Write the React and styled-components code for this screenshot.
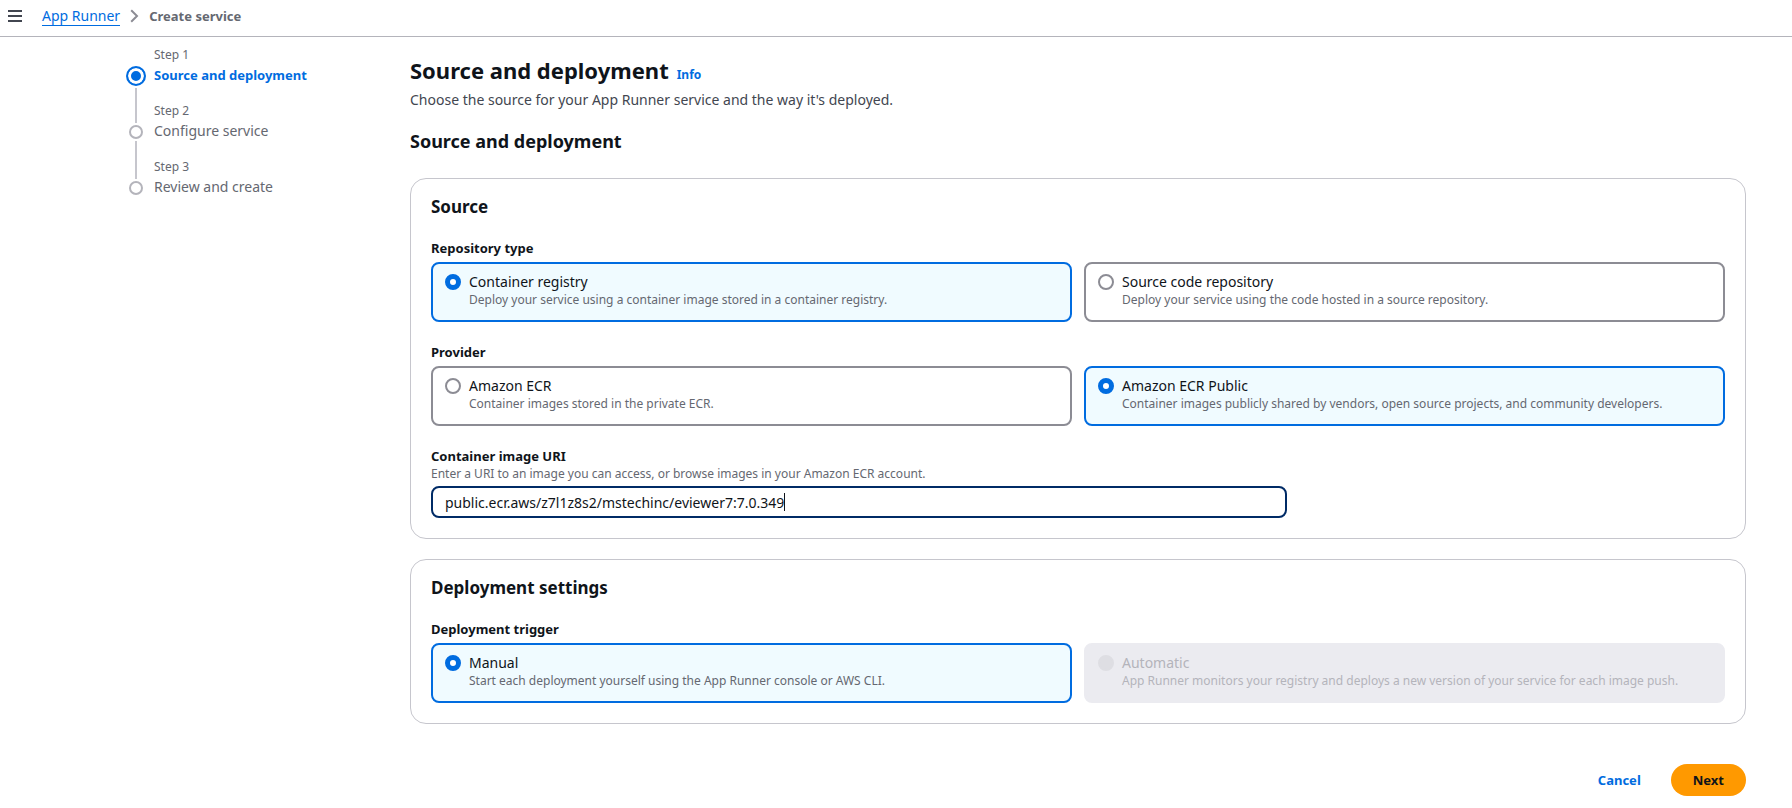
import React, { useLayoutEffect, useRef, useState } from 'react'
import styled, { createGlobalStyle } from 'styled-components';

const steps = ['Source and deployment', 'Configure service', 'Review and create'];

function OptionTile({ name, value, title, description, selected, onSelect, disabled }) {
  return (
    <Tile>
      <TileRadio
        type="radio"
        name={name}
        value={value}
        checked={selected === value}
        disabled={disabled}
        onChange={() => onSelect(value)}
      />
      <TileText>
        <TileTitle>{title}</TileTitle>
        <TileDescription>{description}</TileDescription>
      </TileText>
    </Tile>
  )
}

// Text input with its own caret, placed by measuring the text before it
function CaretInput({ value, onChange, ...rest }) {
  const inputRef = useRef(null);
  const [caret, setCaret] = useState(null);

  const placeCaret = () => {
    const input = inputRef.current;
    const style = getComputedStyle(input);
    const context = document.createElement('canvas').getContext('2d');
    context.font = `${style.fontWeight} ${style.fontSize} ${style.fontFamily}`;
    const width = context.measureText(input.value.slice(0, input.selectionEnd)).width;
    const start = parseInt(style.borderLeftWidth) + parseInt(style.paddingLeft);
    setCaret(Math.round(start + width - input.scrollLeft));
  };

  useLayoutEffect(() => {
    const input = inputRef.current;
    input.focus();
    input.setSelectionRange(input.value.length, input.value.length);
    placeCaret();
  }, []);

  return (
    <InputWrap>
      <TextInput
        {...rest}
        ref={inputRef}
        type="text"
        value={value}
        onChange={(e) => onChange(e.target.value)}
        onSelect={placeCaret}
        onBlur={() => setCaret(null)}
      />
      {caret !== null && <Caret style={{ left: caret }} />}
    </InputWrap>
  )
}

function App() {
  const [repositoryType, setRepositoryType] = useState('registry');
  const [provider, setProvider] = useState('ecr-public');
  const [trigger, setTrigger] = useState('manual');
  const [imageUri, setImageUri] = useState('public.ecr.aws/z7l1z8s2/mstechinc/eviewer7:7.0.349');

  return (
    <>
      <GlobalStyle />
      <TopBar>
        <MenuButton type="button" aria-label="Open navigation">
          <svg width="14" height="12" viewBox="0 0 14 12" fill="none" stroke="currentColor" strokeWidth="2">
            <path d="M0 1h14M0 6h14M0 11h14" />
          </svg>
        </MenuButton>
        <Breadcrumbs aria-label="Breadcrumbs">
          <BreadcrumbLink href="#app-runner">App Runner</BreadcrumbLink>
          <Chevron width="9" height="14" viewBox="0 0 9 14" fill="none" stroke="currentColor" strokeWidth="2">
            <path d="M1.200 1.200 7 7l-5.800 5.800" />
          </Chevron>
          <CurrentPage>Create service</CurrentPage>
        </Breadcrumbs>
      </TopBar>

      <Layout>
        <StepList>
          {steps.map((step, index) => (
            <Step key={step}>
              <StepTrack>
                <StepLead $hidden={index === 0} />
                <StepDot $active={index === 0} />
                {index < steps.length - 1 && <StepLine />}
              </StepTrack>
              <StepText>
                <StepNumber>Step {index + 1}</StepNumber>
                <StepName $active={index === 0}>{step}</StepName>
              </StepText>
            </Step>
          ))}
        </StepList>

        <Main>
          <TitleRow>
            <PageTitle>Source and deployment</PageTitle>
            <InfoLink href="#info">Info</InfoLink>
          </TitleRow>
          <Subtitle>Choose the source for your App Runner service and the way it's deployed.</Subtitle>
          <SectionTitle>Source and deployment</SectionTitle>

          <Panels>
            <Panel>
              <PanelTitle>Source</PanelTitle>
              <Fields>
                <FieldGroup>
                  <Legend>Repository type</Legend>
                  <Tiles>
                    <OptionTile
                      name="repositoryType"
                      value="registry"
                      title="Container registry"
                      description="Deploy your service using a container image stored in a container registry."
                      selected={repositoryType}
                      onSelect={setRepositoryType}
                    />
                    <OptionTile
                      name="repositoryType"
                      value="source"
                      title="Source code repository"
                      description="Deploy your service using the code hosted in a source repository."
                      selected={repositoryType}
                      onSelect={setRepositoryType}
                    />
                  </Tiles>
                </FieldGroup>

                <FieldGroup>
                  <Legend>Provider</Legend>
                  <Tiles>
                    <OptionTile
                      name="provider"
                      value="ecr"
                      title="Amazon ECR"
                      description="Container images stored in the private ECR."
                      selected={provider}
                      onSelect={setProvider}
                    />
                    <OptionTile
                      name="provider"
                      value="ecr-public"
                      title="Amazon ECR Public"
                      description="Container images publicly shared by vendors, open source projects, and community developers."
                      selected={provider}
                      onSelect={setProvider}
                    />
                  </Tiles>
                </FieldGroup>

                <div>
                  <Label htmlFor="imageUri">Container image URI</Label>
                  <Hint id="imageUriHint">
                    Enter a URI to an image you can access, or browse images in your Amazon ECR account.
                  </Hint>
                  <CaretInput
                    id="imageUri"
                    aria-describedby="imageUriHint"
                    value={imageUri}
                    onChange={setImageUri}
                    spellCheck={false}
                  />
                </div>
              </Fields>
            </Panel>

            <Panel>
              <PanelTitle>Deployment settings</PanelTitle>
              <FieldGroup>
                <Legend>Deployment trigger</Legend>
                <Tiles>
                  <OptionTile
                    name="trigger"
                    value="manual"
                    title="Manual"
                    description="Start each deployment yourself using the App Runner console or AWS CLI."
                    selected={trigger}
                    onSelect={setTrigger}
                  />
                  <OptionTile
                    name="trigger"
                    value="automatic"
                    title="Automatic"
                    description="App Runner monitors your registry and deploys a new version of your service for each image push."
                    selected={trigger}
                    onSelect={setTrigger}
                    disabled
                  />
                </Tiles>
              </FieldGroup>
            </Panel>
          </Panels>

          <Actions>
            <CancelButton type="button">Cancel</CancelButton>
            <NextButton type="button">Next</NextButton>
          </Actions>
        </Main>
      </Layout>
    </>
  )
}

export default App

const GlobalStyle = createGlobalStyle`
  * {
    box-sizing: border-box;
  }
  body {
    margin: 0;
    background: #fff;
    color: #0f141a;
    font-family: "Noto Sans", "Open Sans", sans-serif;
    font-size: 14px;
    line-height: 20px;
  }
  h1, h2, h3, p, ol, fieldset {
    margin: 0;
    padding: 0;
  }
  h1, h2, h3 {
    font-weight: 700;
  }
  button, input {
    font: inherit;
  }
`;

const TopBar = styled.header`
  display: flex;
  align-items: center;
  gap: 20px;
  height: 37px;
  padding: 0 8px 4px;
  border-bottom: 1px solid #b4b4bb;
`;

const MenuButton = styled.button`
  display: flex;
  padding: 0;
  border: none;
  background: none;
  color: #424650;
  cursor: pointer;
`;

const Breadcrumbs = styled.nav`
  display: flex;
  align-items: center;
  gap: 10px;
`;

const BreadcrumbLink = styled.a`
  height: 19px;
  line-height: 18px;
  border-bottom: 1px solid #006ce0;
  color: #006ce0;
  text-decoration: none;
`;

const Chevron = styled.svg`
  color: #8c8c94;
`;

const CurrentPage = styled.span`
  color: #656871;
  font-size: 13px;
  font-weight: 700;
`;

const Layout = styled.div`
  display: grid;
  grid-template-columns: 244px minmax(0, 1fr);
  gap: 40px;
  padding: 0 46px 12px 126px;
`;

const StepList = styled.ol`
  padding-top: 10px;
  list-style: none;
`;

const Step = styled.li`
  display: flex;
  gap: 8px;
  min-height: 56px;
`;

const StepTrack = styled.div`
  display: flex;
  flex-direction: column;
  align-items: center;
  gap: 2px;
  width: 20px;
`;

const StepLead = styled.span`
  width: 2px;
  height: ${(props) => (props.$hidden ? '17px' : '20px')};
  background: ${(props) => (props.$hidden ? 'transparent' : '#c6c6cd')};
`;

const StepDot = styled.span`
  width: ${(props) => (props.$active ? '20px' : '14px')};
  height: ${(props) => (props.$active ? '20px' : '14px')};
  border: 2px solid ${(props) => (props.$active ? '#006ce0' : '#b4b4bb')};
  border-radius: 50%;
  background: ${(props) => (props.$active ? '#006ce0' : '#fff')};
  box-shadow: ${(props) => (props.$active ? 'inset 0 0 0 3px #fff' : 'none')};
`;

const StepLine = styled.span`
  flex: 1;
  width: 2px;
  background: #c6c6cd;
`;

const StepText = styled.div`
  display: flex;
  flex-direction: column;
  gap: 2px;
`;

const StepNumber = styled.span`
  color: #656871;
  font-size: 12px;
  line-height: 16px;
`;

const StepName = styled.span`
  color: ${(props) => (props.$active ? '#006ce0' : '#656871')};
  font-size: ${(props) => (props.$active ? '13px' : '14px')};
  font-weight: ${(props) => (props.$active ? 700 : 400)};
`;

const Main = styled.main`
  padding-top: 18px;
`;

const TitleRow = styled.div`
  display: flex;
  align-items: baseline;
  gap: 8px;
`;

const PageTitle = styled.h1`
  font-size: 22px;
  line-height: 30px;
`;

const InfoLink = styled.a`
  color: #006ce0;
  font-size: 12px;
  font-weight: 700;
  line-height: 16px;
  text-decoration: none;
`;

const Subtitle = styled.p`
  margin-top: 5px;
  color: #424650;
`;

const SectionTitle = styled.h2`
  margin: 19px 0 25px;
  font-size: 18px;
  line-height: 24px;
`;

const Panels = styled.div`
  display: flex;
  flex-direction: column;
  gap: 20px;
`;

const Panel = styled.section`
  padding: 17px 20px 20px;
  border: 1px solid #c6c6cd;
  border-radius: 16px;
`;

const PanelTitle = styled.h3`
  margin-bottom: 20px;
  font-size: 17px;
  line-height: 22px;
`;

const Fields = styled.div`
  display: flex;
  flex-direction: column;
  gap: 20px;
`;

const FieldGroup = styled.fieldset`
  min-width: 0;
  border: none;
`;

const Legend = styled.legend`
  padding: 0 0 4px;
  font-size: 13px;
  font-weight: 700;
`;

const Tiles = styled.div`
  display: grid;
  grid-template-columns: 1fr 1fr;
  gap: 12px;
`;

const Tile = styled.label`
  display: flex;
  gap: 8px;
  padding: 8px 12px 12px;
  border: 2px solid #8c8c94;
  border-radius: 8px;
  cursor: pointer;

  &:has(input:checked) {
    border-color: #006ce0;
    background: #f0fbff;
  }

  &:has(input:disabled) {
    border-color: #ebebf0;
    background: #ebebf0;
    color: #b4b4bb;
    cursor: default;
  }
`;

const TileRadio = styled.input`
  appearance: none;
  flex: none;
  width: 16px;
  height: 16px;
  margin: 2px 0 0;
  border: 2px solid #8c8c94;
  border-radius: 50%;
  background: #fff;

  &:checked {
    border: 5px solid #006ce0;
  }

  &:disabled {
    border-color: #dedee3;
    background: #dedee3;
  }
`;

const TileText = styled.span`
  display: flex;
  flex-direction: column;
`;

const TileTitle = styled.span`
  line-height: 20px;
`;

const TileDescription = styled.span`
  color: #656871;
  font-size: 12px;
  line-height: 16px;

  input:disabled + ${TileText} & {
    color: inherit;
  }
`;

const Label = styled.label`
  display: block;
  font-size: 13px;
  font-weight: 700;
`;

const Hint = styled.p`
  margin-bottom: 4px;
  color: #656871;
  font-size: 12px;
  line-height: 16px;
`;

const InputWrap = styled.div`
  position: relative;
  width: calc((100% - 10px) * 2 / 3);
`;

const TextInput = styled.input`
  display: block;
  width: 100%;
  height: 32px;
  padding: 0 12px;
  border: 2px solid #8c8c94;
  border-radius: 8px;
  outline: none;
  background: #fff;
  color: #0f141a;
  caret-color: transparent;

  &:focus {
    border-color: #002b66;
  }
`;

const Caret = styled.span`
  position: absolute;
  top: 7px;
  bottom: 7px;
  width: 1px;
  background: #0f141a;
  pointer-events: none;
`;

const Actions = styled.div`
  display: flex;
  justify-content: flex-end;
  gap: 8px;
  margin-top: 40px;
`;

const ActionButton = styled.button`
  height: 32px;
  padding: 0 22px;
  border: none;
  border-radius: 20px;
  font-size: 13px;
  font-weight: 700;
  cursor: pointer;
`;

const CancelButton = styled(ActionButton)`
  background: none;
  color: #006ce0;
`;

const NextButton = styled(ActionButton)`
  background: #ff9900;
  color: #0f141a;
`;
